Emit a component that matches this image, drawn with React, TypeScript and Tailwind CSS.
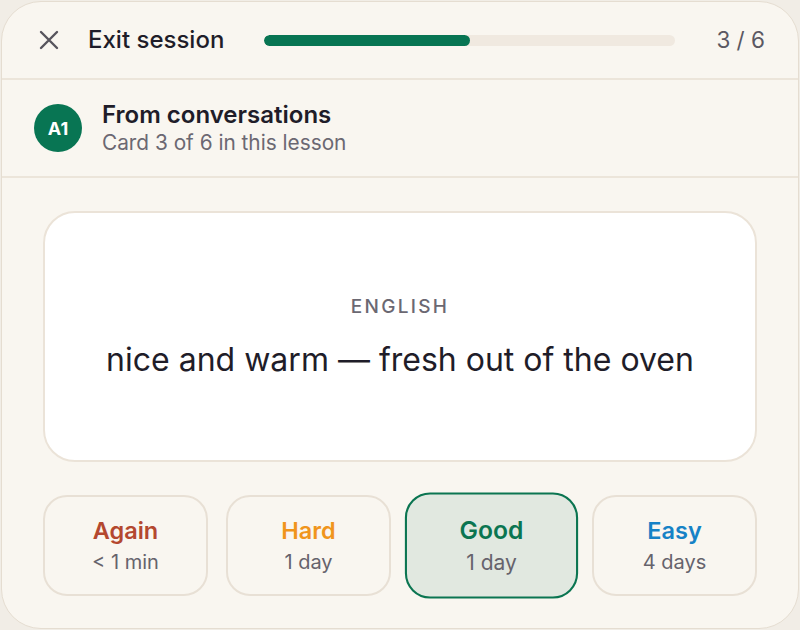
type Grade = {
  label: string
  interval: string
  color: string
  active?: boolean
}

const grades: Grade[] = [
  { label: 'Again', interval: '< 1 min', color: 'text-[#b4482f]' },
  { label: 'Hard', interval: '1 day', color: 'text-[#f0951c]' },
  { label: 'Good', interval: '1 day', color: 'text-[#0b7551]', active: true },
  { label: 'Easy', interval: '4 days', color: 'text-[#1682c6]' },
]

export default function App() {
  return (
    <div className="h-[630px] w-[800px] bg-[#f1ede6] p-px" style={{ fontFamily: 'Inter, "Noto Sans", sans-serif' }}>
      <div className="flex h-full flex-col overflow-hidden rounded-[40px] border border-[#e5ddd1] bg-[#f9f6f0]">

        {/* top bar: exit + progress */}
        <div className="flex h-[78px] shrink-0 items-center border-b-2 border-[#ece5da] pl-[37px] pr-[33px]">
          <svg width="20" height="20" viewBox="0 0 20 20" fill="none" stroke="#57545d" strokeWidth="2.4" strokeLinecap="round">
            <path d="M2 2L18 18M18 2L2 18" />
          </svg>
          <span className="ml-[29px] text-[24px] font-medium text-[#1f1d29]">Exit session</span>
          <div className="ml-[40px] h-[11px] flex-1 overflow-hidden rounded-full bg-[#f0e9e0]">
            <div className="h-full w-1/2 rounded-full bg-[#087553]" />
          </div>
          <span className="ml-[41px] text-[22.5px] text-[#5b5862]">3 / 6</span>
        </div>

        {/* lesson info */}
        <div className="flex h-[98px] shrink-0 items-center gap-[20px] border-b-2 border-[#ece5da] px-[32px]">
          <div className="flex h-[48px] w-[48px] items-center justify-center rounded-full bg-[#087553] text-[18px] font-bold text-white">
            A1
          </div>
          <div className="flex flex-col">
            <span className="text-[24px] font-semibold leading-[29px] text-[#1f1d29]">From conversations</span>
            <span className="text-[20.8px] leading-[27px] text-[#6b6872]">Card 3 of 6 in this lesson</span>
          </div>
        </div>

        {/* flashcard */}
        <div className="flex flex-1 flex-col px-[41px] pt-[33px] pb-[32px]">
          <div className="flex h-[251px] flex-col items-center justify-center rounded-[32px] border-2 border-[#ebe3d8] bg-white pt-[1px]">
            <span className="text-[19px] font-medium leading-[24px] tracking-[0.12em] text-[#6b6872]">ENGLISH</span>
            <span className="mt-[21px] text-[32px] leading-[40px] text-[#1f1d29]">nice and warm — fresh out of the oven</span>
          </div>

          {/* grading buttons */}
          <div className="mt-[33px] grid grid-cols-4 gap-[18px]">
            {grades.map((g) => (
              <button
                key={g.label}
                className={
                  g.active
                    ? 'flex h-[101px] scale-105 flex-col items-center justify-center rounded-[24px] border-2 border-[#0b7551] bg-[#e1e8e0]'
                    : 'flex h-[101px] flex-col items-center justify-center rounded-[24px] border-2 border-[#e8e0d5] bg-[#f9f6f0]'
                }
              >
                <span className={`text-[23.5px] font-semibold leading-[28px] ${g.color}`}>{g.label}</span>
                <span className="mt-[5px] text-[20px] leading-[24px] text-[#66636c]">{g.interval}</span>
              </button>
            ))}
          </div>
        </div>
      </div>
    </div>
  )
}
